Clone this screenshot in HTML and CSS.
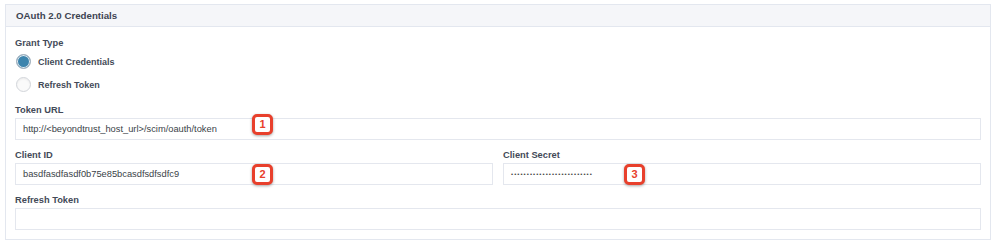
FILE: index.html
```html
<!DOCTYPE html>
<html>
<head>
<meta charset="utf-8">
<link rel="stylesheet" href="styles.css">
</head>
<body>
<div class="panel">
  <div class="panel-head">OAuth 2.0 Credentials</div>
  <div class="panel-body">
    <div class="grant">
      <div class="label">Grant Type</div>
      <div class="radio-row"><span class="radio checked"></span><span class="radio-text">Client Credentials</span></div>
      <div class="radio-row"><span class="radio"></span><span class="radio-text">Refresh Token</span></div>
    </div>
    <div class="field">
      <div class="label">Token URL</div>
      <div class="input-wrap">
        <div class="input">http://&lt;beyondtrust_host_url&gt;/scim/oauth/token</div>
        <span class="badge b1">1</span>
      </div>
    </div>
    <div class="field two">
      <div class="col">
        <div class="label">Client ID</div>
        <div class="input-wrap">
          <div class="input">basdfasdfasdf0b75e85bcasdfsdfsdfc9</div>
          <span class="badge b2">2</span>
        </div>
      </div>
      <div class="col">
        <div class="label">Client Secret</div>
        <div class="input-wrap">
          <div class="input secret">••••••••••••••••••••••••••</div>
          <span class="badge b3">3</span>
        </div>
      </div>
    </div>
    <div class="field">
      <div class="label">Refresh Token</div>
      <div class="input-wrap">
        <div class="input"></div>
      </div>
    </div>
  </div>
</div>
</body>
</html>
```
FILE: styles.css
```css
* { box-sizing: border-box; }
html, body { margin: 0; background: #fff; }
body {
  padding: 4px 8px 0 5px;
  font-family: "Liberation Sans", Arial, sans-serif;
  color: #3a4150;
}
.panel {
  width: 986px;
  border: 1px solid #e3e7ef;
}
.panel-head {
  height: 22px;
  line-height: 22px;
  padding-left: 10px;
  background: #f5f6f9;
  border-bottom: 1px solid #e3e7ef;
  font-size: 9.7px;
  font-weight: bold;
  color: #3d4452;
}
.panel-body {
  padding: 9px 9px 9px 9px;
  display: flex;
  flex-direction: column;
}
.label {
  height: 13px;
  line-height: 14px;
  font-size: 9.3px;
  font-weight: bold;
  color: #434a58;
  margin-bottom: 2px;
}
.grant .label { margin-bottom: 1px; }
.radio-row {
  height: 23px;
  display: flex;
  align-items: center;
}
.radio {
  width: 15px;
  height: 15px;
  border-radius: 50%;
  border: 1px solid #d2d5da;
  background: #fafafa;
  box-shadow: inset 0 1px 2px rgba(0,0,0,0.06);
  margin-left: 1px;
}
.radio.checked {
  background: #3c84ad;
  border: 1px solid #aab4be;
  box-shadow: inset 0 0 0 1px #e9eef2;
}
.radio-text {
  margin-left: 7px;
  font-size: 9px;
  font-weight: bold;
  color: #434a58;
}
.field { margin-top: 7px; }
.field + .field { margin-top: 8px; }
.two {
  display: grid;
  grid-template-columns: 1fr 1fr;
  column-gap: 10px;
}
.input-wrap { position: relative; }
.input {
  height: 22px;
  line-height: 21px;
  border: 1px solid #e4e7ee;
  background: #fff;
  padding-left: 7px;
  font-size: 9.3px;
  color: #3a3f48;
}
.input.secret {
  font-size: 6px;
  letter-spacing: 1.05px;
  padding-left: 7px;
  color: #444;
}
.badge {
  position: absolute;
  width: 21px;
  height: 21px;
  border: 3px solid #e8402c;
  border-radius: 5px;
  background: #fff;
  color: #e8402c;
  font-size: 11px;
  font-weight: bold;
  text-align: center;
  line-height: 15px;
  box-shadow: 0 1px 3px rgba(0,0,0,0.35);
}
.b1 { left: 237px; top: -4px; }
.b2 { left: 237px; top: 1px; }
.b3 { left: 121px; top: 1px; }
```
